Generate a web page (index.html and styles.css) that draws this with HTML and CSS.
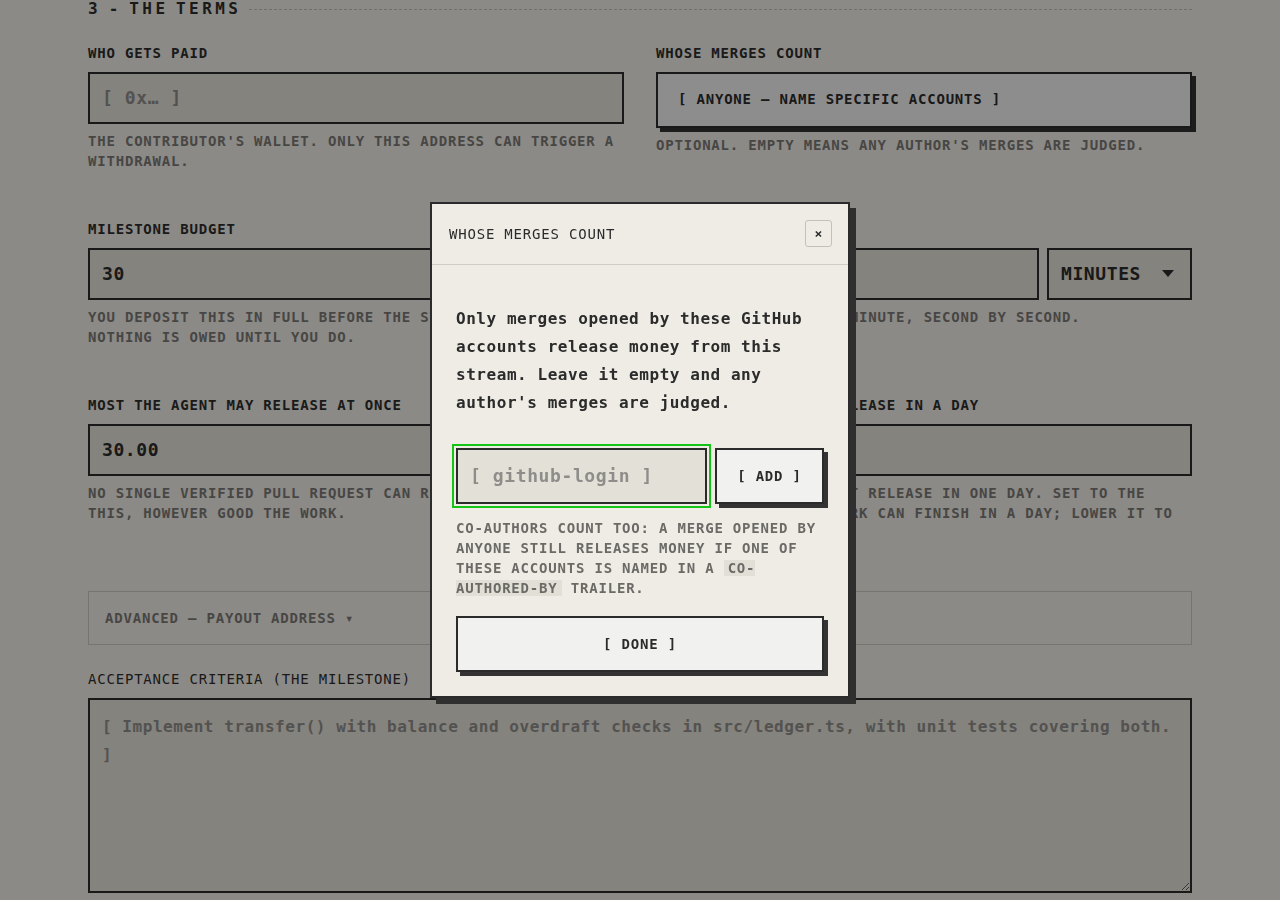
FILE: index.html
```html
<!DOCTYPE html>
<html lang="en">
<head>
<meta charset="utf-8">
<title>New stream — the terms</title>
<link rel="stylesheet" href="styles.css">
</head>
<body>
<main class="page">
  <section class="section">
    <h2 class="section-title"><span>3 - THE TERMS</span></h2>

    <div class="grid">
      <div class="field">
        <label class="label" for="payee">Who gets paid</label>
        <input class="input" id="payee" placeholder="[ 0x… ]">
        <p class="help">The contributor's wallet. Only this address can trigger a withdrawal.</p>
      </div>

      <div class="field">
        <span class="label">Whose merges count</span>
        <button class="btn btn-wide" type="button">[ Anyone — name specific accounts ]</button>
        <p class="help">Optional. Empty means any author's merges are judged.</p>
      </div>

      <div class="field">
        <label class="label" for="budget">Milestone budget</label>
        <input class="input input-value" id="budget" value="30">
        <p class="help">You deposit this in full before the stream can start. Nothing is owed until you do.</p>
      </div>

      <div class="field">
        <label class="label" for="window">Time window</label>
        <div class="duo">
          <input class="input input-value" id="window" value="60">
          <button class="select" type="button">
            <span>Minutes</span>
            <svg width="12" height="7" viewBox="0 0 12 7" aria-hidden="true"><polygon points="0,0 12,0 6,7" fill="#2b2b2b"/></svg>
          </button>
        </div>
        <p class="help">It streams minute by minute, second by second.</p>
      </div>

      <div class="field">
        <label class="label" for="per-pr">Most the agent may release at once</label>
        <input class="input input-value" id="per-pr" value="30.00">
        <p class="help">No single verified pull request can release more than this, however good the work.</p>
      </div>

      <div class="field">
        <label class="label" for="per-day">Most the agent may release in a day</label>
        <input class="input input-value" id="per-day" value="30.00">
        <p class="help">The most the bot might release in one day. Set to the budget if the full work can finish in a day; lower it to spread it.</p>
      </div>
    </div>

    <details class="advanced">
      <summary>Advanced — payout address ▾</summary>
    </details>

    <div class="field field-criteria">
      <label class="label label-plain" for="criteria">Acceptance criteria (the milestone)</label>
      <textarea class="textarea" id="criteria" placeholder="[ Implement transfer() with balance and overdraft checks in src/ledger.ts, with unit tests covering both. ]"></textarea>
    </div>
  </section>
</main>

<div class="overlay">
  <div class="modal" role="dialog" aria-labelledby="merges-title">
    <header class="modal-head">
      <h3 class="modal-title" id="merges-title">Whose merges count</h3>
      <button class="close" type="button" aria-label="Close">×</button>
    </header>
    <div class="modal-body">
      <p class="modal-text">Only merges opened by these GitHub accounts release money from this stream. Leave it empty and any author's merges are judged.</p>
      <div class="add-row">
        <input class="input input-login is-focused" placeholder="[ github-login ]">
        <button class="btn btn-add" type="button">[ Add ]</button>
      </div>
      <p class="note">Co-authors count too: a merge opened by anyone still releases money if one of these accounts is named in a <code>Co-authored-by</code> trailer.</p>
      <button class="btn btn-done" type="button">[ Done ]</button>
    </div>
  </div>
</div>
</body>
</html>
```

FILE: styles.css
```css
* {
  box-sizing: border-box;
}

html,
body {
  margin: 0;
  height: 100%;
  overflow: hidden;
}

body {
  background: #efece5;
  color: #2e2e2e;
  font-family: "DejaVu Sans Mono", "Liberation Mono", monospace;
}

.page {
  width: 1104px;
  margin: 0 auto;
}

/* section heading with a dashed rule running to the edge */
.section-title {
  display: flex;
  align-items: center;
  gap: 8px;
  margin: 0;
  height: 18px;
  font-size: 16px;
  line-height: 18px;
  font-weight: bold;
  letter-spacing: 3.4px;
  word-spacing: -5.4px;
  color: #2e2e2e;
}

.section-title::after {
  content: "";
  flex: 1;
  border-top: 1px dashed #c3c0b8;
}

.grid {
  display: grid;
  grid-template-columns: 1fr 1fr;
  column-gap: 32px;
  row-gap: 48px;
  margin-top: 25px;
}

.field {
  min-width: 0;
}

.label {
  display: block;
  margin-bottom: 9px;
  font-size: 14px;
  line-height: 20px;
  font-weight: bold;
  letter-spacing: 0.8px;
  text-transform: uppercase;
  color: #2e2e2e;
}

.label-plain {
  font-weight: normal;
}

.help {
  margin: 7px 0 0;
  font-size: 14px;
  line-height: 20px;
  font-weight: bold;
  letter-spacing: 0.8px;
  text-transform: uppercase;
  color: #7a7975;
}

.input {
  display: block;
  width: 100%;
  height: 52px;
  margin: 0;
  padding: 0 12px 2px;
  border: 2px solid #2b2b2b;
  border-radius: 0;
  background: #e3e0d8;
  font-family: inherit;
  font-size: 18px;
  font-weight: bold;
  letter-spacing: 0.6px;
  color: #2b2b2b;
  outline: none;
}

.input::placeholder {
  color: #8e8d89;
}

.duo {
  display: flex;
  gap: 8px;
}

.duo .input {
  flex: 1;
  min-width: 0;
}

.select {
  display: flex;
  align-items: center;
  justify-content: space-between;
  flex: 0 0 145px;
  height: 52px;
  padding: 0 16px 2px 12px;
  border: 2px solid #2b2b2b;
  background: #e3e0d8;
  font-family: inherit;
  font-size: 18px;
  font-weight: bold;
  letter-spacing: 0.6px;
  text-transform: uppercase;
  color: #2b2b2b;
}

/* raised buttons with a hard offset shadow */
.btn {
  display: block;
  margin: 0;
  border: 2px solid #2b2b2b;
  border-radius: 0;
  background: #f1f1f0;
  box-shadow: 4px 4px 0 #333;
  font-family: inherit;
  font-size: 14px;
  font-weight: bold;
  letter-spacing: 0.8px;
  text-transform: uppercase;
  color: #2b2b2b;
}

.btn-wide {
  width: 100%;
  height: 56px;
  padding: 0 20px 2px;
  text-align: left;
  background: #f2f2f2;
}

.advanced {
  margin-top: 48px;
  padding: 16px;
  border: 1px solid #c9c6be;
}

.advanced summary {
  display: block;
  list-style: none;
  font-size: 14px;
  line-height: 20px;
  font-weight: bold;
  letter-spacing: 0.8px;
  text-transform: uppercase;
  color: #7a7975;
}

.advanced summary::-webkit-details-marker {
  display: none;
}

.field-criteria {
  margin-top: 24px;
}

.textarea {
  display: block;
  width: 100%;
  height: 195px;
  margin: 0;
  padding: 13px 12px 12px;
  border: 2px solid #2b2b2b;
  border-radius: 0;
  background: #e3e0d8;
  font-family: inherit;
  font-size: 16px;
  line-height: 28px;
  font-weight: bold;
  letter-spacing: 0.55px;
  color: #2b2b2b;
  resize: vertical;
  outline: none;
}

.textarea::placeholder {
  color: #8e8d89;
}

/* dialog */
.overlay {
  position: fixed;
  inset: 0;
  display: flex;
  align-items: center;
  justify-content: center;
  background: rgba(0, 0, 0, 0.414);
}

.modal {
  width: 420px;
  background: #efece5;
  border: 2px solid #2b2b2b;
  box-shadow: 6px 6px 0 #2f2f2f;
}

.modal-head {
  display: flex;
  align-items: center;
  justify-content: space-between;
  height: 61px;
  padding: 0 16px 1px 17px;
  border-bottom: 1px solid #cfccc5;
}

.modal-title {
  margin: 0;
  font-size: 14px;
  line-height: 20px;
  font-weight: normal;
  letter-spacing: 0.8px;
  text-transform: uppercase;
  color: #2b2b2b;
}

.close {
  width: 27px;
  height: 27px;
  padding: 0;
  border: 1px solid #c4c1ba;
  border-radius: 3px;
  background: transparent;
  font-family: inherit;
  font-size: 13px;
  font-weight: bold;
  line-height: 1;
  color: #2b2b2b;
}

.modal-body {
  padding: 40px 24px 24px;
}

.modal-text {
  margin: 0 0 31px;
  font-size: 16px;
  line-height: 28px;
  font-weight: bold;
  letter-spacing: 0.55px;
  color: #2b2b2b;
}

.add-row {
  display: flex;
  gap: 8px;
}

.input-login {
  flex: 1;
  min-width: 0;
  height: 56px;
}

.is-focused {
  outline: 2px solid #14c414;
  outline-offset: 2px;
}

.btn-add {
  flex: 0 0 109px;
  height: 56px;
}

.note {
  margin: 14px 0 18px;
  font-size: 14px;
  line-height: 20px;
  font-weight: bold;
  letter-spacing: 0.8px;
  text-transform: uppercase;
  color: #6b6a66;
}

.note code {
  padding: 0 4px;
  background: #e2dfd7;
  font-family: inherit;
  font-size: inherit;
}

.btn-done {
  width: 100%;
  height: 56px;
  text-align: center;
}
```
